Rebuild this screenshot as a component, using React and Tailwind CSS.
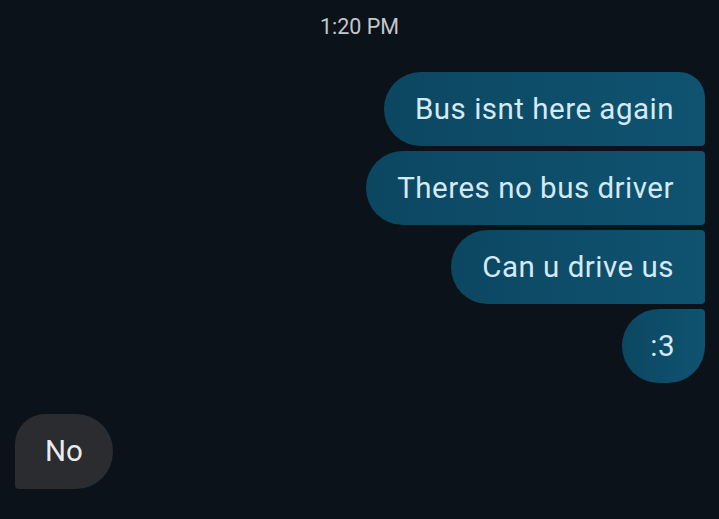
export default function App() {
  const sent = [
    { text: 'Bus isnt here again', cls: 'px-[31px] rounded-l-[37px] rounded-tr-[26px] rounded-br-[4px]' },
    { text: 'Theres no bus driver', cls: 'px-[31px] rounded-l-[37px] rounded-r-[4px]' },
    { text: 'Can u drive us', cls: 'px-[31px] rounded-l-[37px] rounded-r-[4px]' },
    { text: ':3', cls: 'pl-[28px] pr-[30px] rounded-l-[37px] rounded-tr-[4px] rounded-br-[37px]' },
  ]
  return (
    <div className="w-[719px] h-[519px] overflow-hidden bg-[#0b121a] font-['Roboto','Noto_Sans',sans-serif]">
      <div className="pt-[14px] text-center text-[21.5px] leading-[26px] text-[#c3c7cc]">1:20 PM</div>
      <div className="mt-[32px] flex flex-col items-end gap-[5px] pr-[14px]">
        {sent.map(m => (
          <div
            key={m.text}
            className={`h-[74px] flex items-center text-[29.5px] tracking-[0.5px] text-[#d5e9f3] bg-gradient-to-r from-[#0c4761] to-[#0f5371] ${m.cls}`}
          >
            {m.text}
          </div>
        ))}
      </div>
      <div className="mt-[31px] pl-[15px]">
        <div className="w-[98px] h-[75px] flex items-center justify-center text-[29.5px] text-[#e9eaec] bg-[#2a2c2f] rounded-tl-[30px] rounded-r-[37px] rounded-bl-[4px]">
          No
        </div>
      </div>
    </div>
  )
}
